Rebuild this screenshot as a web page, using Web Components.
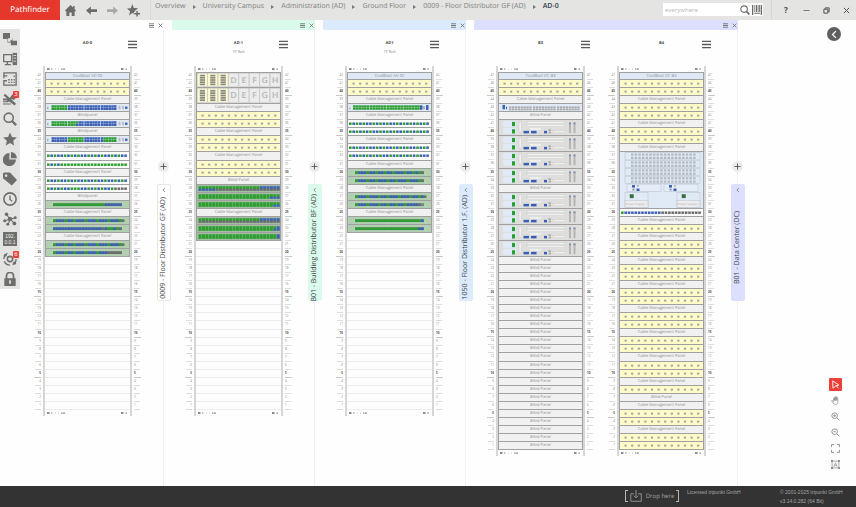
<!DOCTYPE html>
<html lang="en">
<head>
<meta charset="utf-8">
<title>Pathfinder</title>
<style>
  body { margin: 0; background: #fefefe; font-family: "Noto Sans", "Open Sans", sans-serif; }
</style>
</head>
<body>
<path-app></path-app>
<script>
const define = (name, html, init) => {
  const tpl = document.createElement('template');
  tpl.innerHTML = html;
  customElements.define(name, class extends HTMLElement {
    constructor() {
      super();
      this.attachShadow({ mode: 'open' }).append(tpl.content.cloneNode(true));
    }
    connectedCallback() {
      if (init && !this.ready) { this.ready = true; init(this, this.shadowRoot); }
    }
  });
};

/* ---------- icons, each on a 16 x 16 grid ---------- */
const ICONS = {
  home: '<path fill="currentColor" d="M8 0 0 8l1.2 1.300L2 8.600V16h4.300v-5h3.400v5H14V8.600l.8.7L16 8l-2-2V1.500h-2.200V3.700z"/>',
  back: '<path fill="currentColor" d="M0 8 7 2v4h9v4H7v4z"/>',
  fwd: '<path fill="currentColor" d="M16 8 9 2v4H0v4h9v4z"/>',
  starplus: '<path fill="currentColor" d="M6.500 0 8.400 4.900l5.200.3-4 3.400.3.900H8.500v2.600L6.500 11.200 2.500 14l1.300-5.100L0 5.500l4.800-.3zM11.500 8.500h1.800v2.600H16v1.800h-2.700v2.600h-1.800v-2.600H9v-1.800h2.500z"/>',
  search: '<circle cx="6.500" cy="6.500" r="5.200" fill="none" stroke="currentColor" stroke-width="1.800"/><path d="M10.500 10.500 15 15" stroke="currentColor" stroke-width="2.600"/>',
  barcode: '<path fill="currentColor" d="M0 0h2v16H0zM3.500 0h1v11h-1zM6 0h2.500v11H6zM9.500 0h1v11h-1zM11.500 0h1.500v11h-1.500zM14 0h2v16h-2zM3.500 12.500h9.500V14H3.500z"/>',
  min: '<path d="M1 8h14" stroke="currentColor" stroke-width="1.600"/>',
  restore: '<path fill="none" stroke="currentColor" stroke-width="2.200" d="M2 5h9v9H2zM5 4.500V2h9v9h-2.500"/>',
  close: '<path stroke="currentColor" stroke-width="2.200" d="M2 2l12 12M14 2 2 14"/>',
  menu: '<path stroke="currentColor" stroke-width="2.400" d="M0 2.500h16M0 8h16M0 13.500h16"/>',
  tree: '<path fill="currentColor" d="M0 1h8v6h3v3h5v5H9v-3H5V8H0zM5.500 7v4h3V9.500h2V7z" fill-rule="evenodd"/>',
  pc: '<path fill="none" stroke="currentColor" stroke-width="1.500" d="M.8 3h9v8h-9zM5 11v3M2 14.500h7"/><path fill="currentColor" d="M11 1h5v14h-5z"/><path stroke="#e3e3e1" d="M12 4h3M12 7h3M12 10.500h3"/>',
  plan: '<path fill="none" stroke="currentColor" stroke-width="1.500" d="M1 7V1h14v14H1v-5h3.500M1 4.500h4"/><path fill="currentColor" d="M6 8h1.700v1.700H6zM9 8h1.700v1.700H9zM12 8h1.500v1.700H12zM6 11h1.700v1.700H6zM9 11h1.700v1.700H9zM12 4h1.500v1.700H12zM12 11h1.500v1.700H12z"/>',
  tools: '<path fill="none" stroke="currentColor" stroke-width="2.300" d="M1.500 3 14 14M0 8.500h6l8 6"/><path fill="currentColor" d="M0 10.500h6v1.300H0zM0 13h9v1.300H0zM9 5l3-4 1.500 1-1 3 3 1-3 3-3-1-4 4-1.500-1.500z"/>',
  star: '<path fill="currentColor" d="M8 .5l2.200 5.200 5.600.5-4.200 3.700 1.200 5.600L8 12.600l-4.800 2.900 1.200-5.600L.2 6.200l5.600-.5z"/>',
  pie: '<path fill="currentColor" d="M7.300 1.200v7.500h7.500A7.500 7.500 0 1 1 7.300 1.200zM9 0a7 7 0 0 1 6.800 7H9z"/>',
  tag: '<path fill="currentColor" fill-rule="evenodd" d="M0 1.500 1.500.500H8l8 8.500-6 6.500L0 7zM3.500 2.600a1.500 1.500 0 1 0 .1 0z"/>',
  clock: '<circle cx="8" cy="8" r="7" fill="none" stroke="currentColor" stroke-width="1.800"/><path fill="none" stroke="currentColor" stroke-width="1.500" d="M8 4v4.500l2.500 2"/>',
  nodes: '<path stroke="currentColor" stroke-width="1.200" d="M8 8 4 3M8 8l6-1M8 8l-6 2M8 8l-2 6M8 8l5 5"/><g fill="currentColor"><circle cx="8" cy="8" r="2.600"/><circle cx="4" cy="2.500" r="2"/><circle cx="14" cy="6.500" r="1.700"/><circle cx="2" cy="10" r="1.800"/><circle cx="5.500" cy="14" r="1.700"/><circle cx="13" cy="13" r="2.200"/></g>',
  orbit: '<circle cx="8" cy="8" r="3" fill="none" stroke="currentColor" stroke-width="1.800"/><path fill="none" stroke="currentColor" stroke-width="1.600" d="M5 1.700A7 7 0 0 0 1 8M1.500 10.500A7 7 0 0 0 8 15M11 14.300A7 7 0 0 0 15 8"/><circle cx="2.600" cy="3.800" r="1.600" fill="currentColor"/><circle cx="13.300" cy="12.600" r="1.800" fill="currentColor"/>',
  lock: '<path fill="none" stroke="currentColor" stroke-width="2" d="M4 8V4.500a4 4 0 0 1 8 0V8"/><path fill="currentColor" fill-rule="evenodd" d="M1.500 7h13v9h-13zM7 9.500v4h2v-4z"/>',
  left: '<path fill="none" stroke="currentColor" stroke-width="2.400" d="M10.500 2 4.500 8l6 6"/>',
  up: '<path fill="none" stroke="currentColor" stroke-width="2.200" d="M10 3 5 8l5 5"/>',
  plus: '<path stroke="currentColor" stroke-width="2" d="M8 1v14M1 8h14"/>',
  cursor: '<path fill="none" stroke="currentColor" stroke-width="1.600" d="M3 1.500 14 9l-5 1.200L3.500 14.500zM9 9.500l4 5"/>',
  hand: '<path fill="none" stroke="currentColor" stroke-width="1.300" d="M4.500 10V4q1-1 1.800 0v4-6q1-1 1.800 0v6-6.500q1-1 2 0V8l.2-5q1-1 1.700 0l.2 8q-.5 4-4.200 4-3.500 0-4.800-3L1 8.500q1-1.500 3.500 1.500"/>',
  zoomin: '<circle cx="6.500" cy="6.500" r="5" fill="none" stroke="currentColor" stroke-width="1.700"/><path stroke="currentColor" stroke-width="1.600" d="M10.500 10.500 15 15M4 6.500h5M6.500 4v5"/>',
  zoomout: '<circle cx="6.500" cy="6.500" r="5" fill="none" stroke="currentColor" stroke-width="1.700"/><path stroke="currentColor" stroke-width="1.600" d="M10.500 10.500 15 15M4.500 6.500h4"/>',
  fit: '<path fill="none" stroke="currentColor" stroke-width="1.700" d="M1 5.500V1h4.500M10.500 1H15v4.500M15 10.500V15h-4.500M5.500 15H1v-4.500"/>',
  frame: '<path fill="none" stroke="currentColor" stroke-width="1.300" d="M2 2h12v12H2zM5 12l3-7 3 7M6 9.500h4"/><path fill="currentColor" d="M0 0h3.500v3.500H0zM12.500 0H16v3.500h-3.500zM0 12.500h3.500V16H0zM12.500 12.500H16V16h-3.500z"/>',
  drop: '<path fill="none" stroke="currentColor" stroke-width="1.200" d="M5 5H1v10h14V5h-4M8 0v10M5 7.500 8 10.500l3-3"/>'
};
define('ui-icon', `<style>
  :host { display: block; width: var(--s, 12px); height: var(--s, 12px); }
  svg { display: block; width: 100%; height: 100%; }
</style><svg viewBox="0 0 16 16" aria-hidden="true"></svg>`, (el, root) => {
  root.querySelector('svg').innerHTML = ICONS[el.getAttribute('name')];
});

/* ---------- top bar ---------- */
define('top-bar', `<style>
  :host { display: flex; height: 20px; background: #e4e4e2; color: #6b6b69; flex: none; }
  button { all: unset; display: grid; place-items: center; width: 20px; }
  .logo { width: 60px; display: grid; place-items: center; background: #e6372d; color: #fff; font-size: 8px; line-height: 20px; text-rendering: geometricPrecision; }
  .nav { display: flex; border-right: 1px solid #dadad8; width: 90px; }
  .nav button { width: 21px; }
  .nav ui-icon { --s: 11px; }
  .dim { color: #a8a8a6; }
  .crumbs { display: flex; align-items: flex-start; gap: 7px; padding: 0 4px; flex: 1; white-space: nowrap; font-size: 7px; line-height: 14px; text-rendering: geometricPrecision; }
  .crumbs a { color: #858582; text-decoration: none; }
  .crumbs i { width: 0; height: 0; align-self: flex-start; margin-top: 5px; border: 2px solid transparent; border-left: 3px solid #777; border-right: 0; }
  .crumbs span { color: #454e5a; font-weight: 600; }
  .find { display: flex; align-items: center; width: 100px; height: 13px; margin: 3px 8px 0 0; background: #fff; align-self: flex-start; }
  .find ui-icon { --s: 10px; }
  .find button { width: 12px; }
  input { flex: 1; min-width: 0; border: 0; padding: 0 0 0 2px; background: none; font: 6px "Noto Sans", sans-serif; outline: 0; }
  input::placeholder { color: #bcbcbc; }
  .win { display: flex; border-left: 1px solid #d6d6d4; padding-left: 4px; color: #4c4c4c; }
  .win ui-icon { --s: 7px; }
  b { font-size: 8px; line-height: 20px; }
</style>
<div class="logo">Pathfinder</div>
<nav class="nav">
  <button aria-label="Home"><ui-icon name="home"></ui-icon></button>
  <button aria-label="Back"><ui-icon name="back"></ui-icon></button>
  <button aria-label="Forward" class="dim"><ui-icon name="fwd"></ui-icon></button>
  <button aria-label="Add favourite"><ui-icon name="starplus" style="--s:13px"></ui-icon></button>
</nav>
<nav class="crumbs"><a href="#">Overview</a><i></i><a href="#">University Campus</a><i></i><a href="#">Administration (AD)</a><i></i><a href="#">Ground Floor</a><i></i><a href="#">0009 - Floor Distributor GF (AD)</a><i></i><span>AD-0</span></nav>
<div class="find"><input type="text" placeholder="everywhere" aria-label="Search everywhere">
  <button aria-label="Search"><ui-icon name="search"></ui-icon></button><button aria-label="Scan barcode"><ui-icon name="barcode"></ui-icon></button></div>
<div class="win"><button aria-label="Help"><b>?</b></button><button aria-label="Minimise"><ui-icon name="min"></ui-icon></button><button aria-label="Restore"><ui-icon name="restore"></ui-icon></button><button aria-label="Close"><ui-icon name="close"></ui-icon></button></div>`);

/* ---------- left tool rail ---------- */
define('side-bar', `<style>
  :host { display: flex; flex-direction: column; width: 20px; background: #e3e3e1; color: #6d6f6c; margin: 9px 1px 0 0; align-self: flex-start; flex: none; }
  button { all: unset; position: relative; display: grid; place-items: center; height: 20px; }
  ui-icon { --s: 14px; }
  em { position: absolute; top: 2px; right: 1px; min-width: 6px; font: 6px/7px "Noto Sans", sans-serif; text-align: center; color: #fff; background: #ee4038; border-radius: 1px; }
  .ip { width: 14px; height: 14px; background: #6d6f6c; color: #f1f1ef; font: 5px/6px "Liberation Sans", sans-serif; padding-top: 1px; box-sizing: border-box; text-align: center; }
</style>`, (el, root) => {
  for (const n of ['tree', 'pc', 'plan', 'tools:3', 'search', 'star', 'pie', 'tag', 'clock', 'nodes', 'ip', 'orbit:6', 'lock']) {
    const [name, badge] = n.split(':');
    const b = document.createElement('button');
    b.setAttribute('aria-label', name);
    b.innerHTML = (name === 'ip' ? '<div class="ip">192.<br>0.0.1</div>' : `<ui-icon name="${name}"></ui-icon>`) + (badge ? `<em>${badge}</em>` : '');
    root.append(b);
  }
});

/* ---------- rack devices ---------- */
const COL = { g: '#2a9e2c', b: '#3c5fb4', k: '#6a6a6a' };
const expand = s => s.replace(/([a-z])(\d+)/g, (m, c, n) => c.repeat(+n));
const rect = (x, y, w, h, f, extra = '') => `<rect x="${x}" y="${y}" width="${w}" height="${h}" fill="${f}" ${extra}/>`;
const ports = (s, x, y, pitch, w, h) => [...expand(s)].map((c, i) => rect(x + i * pitch, y, w, h, COL[c])).join('');
/* drawings use a canvas 83 wide and 8 high per rack unit */
const DRAW = {
  cool: () => '', cable: () => '', blind: () => '',
  fiber: () => Array.from({ length: 12 }, (_, i) => rect(4.500 + i * 6.600, 3, 2.200, 2.200, '#a3a3a0')).join(''),
  switch: a => {
    let o = rect(1, 3, 1.500, 3, '#a9b1bb');
    a.split(',').forEach((g, i) => {
      const [t, u] = g.split('/'), x = 5.500 + i * 16.400;
      o += ports(t, x, 1.400, 2.650, 2.500, 2.600) + ports(u || t, x, 4.200, 2.650, 2.500, 2.600);
    });
    return o + rect(72.500, 2, 2, 4, '#b9bec6') + rect(76, 2, 2, 4, '#b9bec6') + rect(79, 3, 2.500, 2.500, COL.b);
  },
  coreswitch: () => rect(1, 4, 1.500, 2, '#a9b1bb') + [0, 1, 2, 3].map(i => ports('g6', 5 + i * 16.800, 1.500, 2.750, 2.600, 2.400) + ports('g6', 5 + i * 16.800, 4.100, 2.750, 2.600, 2.400)).join('') + rect(72, 1.500, 2.500, 5, COL.b) + rect(75, 2.500, 2, 3.500, '#a9b1bb') + rect(78, 1.200, 2.500, 5.600, COL.b),
  patch: a => ports(a, 1, 2.800, 3.360, 2.600, 2.800),
  panel: a => rect(7, 2.600, 69, 3.200, '#6b8d7b') + ports(a, 7.200, 2.700, 2.860, 2.600, 2.900),
  dense: a => { const [t, u] = a.split('/'); return ports(t, 1.500, 1.400, 3.400, 3.050, 3) + ports(u, 1.500, 4.200, 3.400, 3.050, 2.400); },
  cards: () => {
    let o = '';
    for (let i = 0; i < 8; i++) {
      const x = i * 10.400 + .3;
      o += rect(x, .6, 10, 14.600, i < 3 ? '#fdfbd0' : '#ececec', 'stroke="#bbb" stroke-width=".5"');
      if (i < 3) for (let k = 0; k < 5; k++) o += rect(x + 2.500, 2 + k * 2.500, 5.200, 1.900, '#8a8a84');
      else o += `<text x="${x + 5}" y="11" font-size="9" font-weight="600" text-anchor="middle" fill="#b9b9b9">${'ABCDEFGH'[i]}</text>`;
    }
    return o;
  },
  greyswitch: () => {
    let o = rect(3.500, 1, 2.500, 5, COL.b) + rect(7, 3, 1, 3, COL.b);
    for (let g = 0; g < 3; g++) for (let r = 0; r < 2; r++) for (let i = 0; i < 8; i++) o += rect(10 + g * 24 + i * 2.900, 2.800 + r * 2.400, 2.300, 2, '#a8a8a8');
    return o;
  },
  server: () => rect(4, 1, 13, 6.300, '#dfeaf6') + rect(4, 8.300, 13, 6.300, '#dfeaf6') + rect(13, 2, 3, 4.500, COL.g) + rect(13, 9.800, 3, 4.500, COL.g)
    + rect(20, 2, 2.500, 11, '#efefef', 'stroke="#c4c4c4" stroke-width=".4"') + rect(28, 1.500, 38, 2.400, '#efefef', 'stroke="#c4c4c4" stroke-width=".4"') + rect(28, 4.700, 38, 2.400, '#efefef', 'stroke="#c4c4c4" stroke-width=".4"')
    + rect(31, 8.500, 11, 2, '#efefef') + rect(24.500, 11.500, 5.500, 2.700, COL.b) + rect(32, 11.500, 5.500, 2.700, COL.b) + rect(45, 11.500, 3, 2.700, COL.b) + rect(49.500, 9.800, 2.500, 1.800, '#aaa') + rect(49.500, 12.400, 2.500, 1.800, '#aaa')
    + rect(54, 11.300, 12, 2.200, '#efefef', 'stroke="#c4c4c4" stroke-width=".4"') + rect(70, 2, 2, 12, '#b4b4b4') + rect(74.500, 2, 2, 12, '#b4b4b4') + rect(70, 3, 2, 1.500, '#7d8fb0') + rect(74.500, 3, 2, 1.500, '#7d8fb0'),
  chassis: () => {
    const line = 'stroke="#b5c0cc" stroke-width=".5"';
    let o = '';
    for (let k = 0; k < 4; k++) {
      o += rect(5, .5 + k * 8, 75, 7.500, '#dfeaf5', line);
      for (let r = 0; r < 2; r++) for (let i = 0; i < 18; i++) o += rect(11 + i * 3.650, 1.500 + k * 8 + r * 3.400, 2.500, 2.200, '#b3b8bf');
    }
    for (const x of [7, 44]) o += rect(x, 32.500, 34, 7.500, '#e4edf7', line) + rect(x + 5, 33.500, 3, 2.500, COL.b) + rect(x + 10, 33.500, 2, 1.500, '#aaa') + rect(x + 5.500, 37, 2, 2, '#8b93a5') + rect(x + 9.500, 37, 3, 2.500, COL.b);
    for (const x of [5, 57]) o += rect(x, 41, 23, 15, '#dfeaf5', line) + rect(x + 5, 43, 3.500, 3.500, '#207a30', 'stroke="#555" stroke-width=".4"') + rect(x, 49, 23, 7, '#ededed', line)
      + `<text x="${x + 11.500}" y="53.500" font-size="3" text-anchor="middle" fill="#b3b3b3">Power Supply ${x < 9 ? 1 : 2}</text>`;
    return o;
  }
};
define('rack-device', `<style>
  :host { display: grid; position: relative; min-height: 0; overflow: hidden; box-sizing: border-box; border: 0 solid #a0a0a0; border-width: 0 1px 1px; background: var(--bg, #f1f1f1); text-rendering: geometricPrecision; }
  svg { grid-area: 1/1; width: 100%; height: 100%; display: block; min-height: 0; }
  span { grid-area: 1/1; text-align: center; font: 4px/8px "Open Sans", sans-serif; color: #8c8c8c; white-space: nowrap; }
  :host([kind=cool]) { --bg: #dfe9f6; }
  :host([kind=switch]), :host([kind=coreswitch]), :host([kind=chassis]), :host([kind=greyswitch]) { --bg: #dfeaf6; }
  :host([kind=fiber]) { --bg: #fdfcc9; }
  :host([kind=patch]) { --bg: #fcfcfc; }
  :host([kind=panel]) { --bg: #b3cfb2; }
  :host([kind=dense]) { --bg: #a3bda3; }
  :host([kind=server]) { --bg: #dededc; }
</style><svg preserveAspectRatio="none" aria-hidden="true"></svg><span><slot></slot></span>`, (el, root) => {
  const svg = root.querySelector('svg');
  svg.setAttribute('viewBox', `0 0 83 ${el.getAttribute('units') * 8}`);
  svg.innerHTML = DRAW[el.getAttribute('kind')](el.getAttribute('ports') || '');
});

/* ---------- rack ---------- */
const Y = ['fiber'], C = ['cable'], BP = ['blind', 1, '', 'Blind Panel'], BL = ['blind', 1, '', 'Blindpanel'], SRV = ['server', 2];
const p = (kind, ports) => [kind, 1, ports];
const RACKS = {
  'AD-0': { units: 42, items: [['cool', 1, '', 'CoolBlast AD 00'], Y, Y, C, p('switch', 'g6,b6,b6,b6'), BL, p('switch', 'g6,g4b2/g3b3,b6,b6'), BL, p('switch', 'b6,g6,b6,bg5'), C,
    p('patch', 'gbgbbgbgbgbbgbgbgbbgbgbb'), p('patch', 'gbgbg20'), C, p('patch', 'gbbgbbgbgbbgbbgbbgbbgbgb'), p('patch', 'gbgbgbbgggbbgbgbgbbgk4'), BL,
    p('panel', 'g18b6'), C, p('panel', 'gb3gb2gb3gb3gb3gb3gk'), p('panel', 'b17k1b1g2b1gk'), C, p('panel', 'gb3gb2gb3gb3gb3gb3gk'), p('panel', 'gb3gbbgb3gb3gb3k5')] },
  'AD-1': { units: 42, sub: '19" Rack', items: [['cards', 2], ['cards', 2], C, Y, Y, C, Y, Y, C, Y, Y, BP,
    p('dense', 'g18b6/b5k19'), p('dense', 'g24/g21b3'), p('dense', 'g24/g22b2'), C, p('dense', 'g18b6/k24'), p('dense', 'g23b/g22b2'), p('dense', 'g23b/g23b')] },
  'AD1': { units: 42, sub: '19" Rack', items: [['cool', 1, '', 'CoolBlast AD 02'], Y, Y, C, ['coreswitch'], C,
    p('patch', 'gbgbgbbgbgbgbbgbgbgbgbgb'), p('patch', 'gbgbgbgbbgbgbgbbgbgbgbgb'), C, p('patch', 'gbgbbgbbgbgbbgbgbgbbgbgb'), p('patch', 'gbbgbgbgbgbbgbgbgbgbgbbb'), C,
    p('panel', 'gb3gb2gb2gb2gb3gbbgbgk'), p('panel', 'gb3gb2gb3gbbgb3gb3gk'), C, p('panel', 'gb3gb3gbbgb3gb3gbbgbk'), p('panel', 'gb3gb3gbbgbbgb2gb4k'), C, p('panel', 'g23b'), p('panel', 'g22b2')] },
  'B3': { units: 47, items: [['cool', 1, '', 'CoolBlast DC B3'], Y, Y, C, ['greyswitch'], BP, SRV, SRV, SRV, SRV, BP, SRV, SRV, SRV, SRV, ...Array(24).fill(BP)] },
  'B4': { units: 47, items: [['cool', 1, '', 'CoolBlast DC B4'], Y, Y, C, Y, Y, C, Y, Y, C, ['chassis', 7], p('patch', 'gb11k12'), C, Y, C, Y, Y, C, Y, Y, C, Y, Y, C, Y, Y, C, Y, Y, C, Y, Y, C, Y, BP, C, Y, Y, C, Y, Y] }
};
define('rack-view', `<style>
  :host { display: block; width: 121px; flex: none; }
  header { display: grid; grid-template-columns: 1fr 30px 1fr; align-content: start; row-gap: 1px; height: 27px; padding-top: 9px; }
  h2 { grid-column: 2; margin: 0; font-size: 4px; line-height: 10px; text-align: center; color: #444; text-rendering: geometricPrecision; }
  small { grid-column: 2; font-size: 3px; line-height: 4px; text-align: center; color: #888; }
  button { all: unset; grid-column: 3; grid-row: 1; justify-self: end; margin-right: 11px; align-self: center; color: #5a5a5a; }
  button ui-icon { --s: 9px; }
  .rack { display: grid; grid-template-columns: 7px 89px 7px; column-gap: 2px; justify-content: center; }
  .end { grid-column: 2; display: flex; justify-content: space-between; align-items: center; height: 6px; border: solid #d6d6d6; border-width: 0 2px; padding: 0 2px; color: #8c8c8c; box-sizing: border-box; }
  .end svg { display: block; height: 2px; }
  .body, .nums { display: grid; grid-template-rows: repeat(var(--n), 1fr); height: var(--h); }
  .body { border: solid #d6d6d6; border-width: 0 2px; }
  .body rack-device:first-child { border-top-width: 1px; }
  .nums { grid-column: 1; font-size: 3px; line-height: 7px; color: #909090; }
  .nums i { font-style: normal; text-align: right; border-bottom: 1px solid #dcdcdc; min-height: 0; overflow: hidden; box-sizing: border-box; margin-left: 1px; }
  .nums i.major { margin: 0; font-weight: 700; color: #444; border-color: #c8c8c8; }
  .nums.r { grid-column: 3; }
  .nums.r i { text-align: left; margin: 0 1px 0 0; }
  .nums.r i.major { margin: 0; }
  .free { border-bottom: 1px solid #ececec; box-sizing: border-box; min-height: 0; }
</style>
<header><h2></h2><small></small><button aria-label="Rack menu"><ui-icon name="menu"></ui-icon></button></header>
<div class="rack"><div class="end"></div><div class="nums l"></div><div class="body"></div><div class="nums r"></div><div class="end"></div></div>`, (el, root) => {
  const name = el.getAttribute('name'), cfg = RACKS[name], $ = s => root.querySelector(s);
  $('h2').textContent = name;
  $('small').textContent = cfg.sub || '';
  $('.rack').style.cssText = `--n:${cfg.units};--h:${cfg.units > 42 ? 378 : 338}px`;
  root.querySelectorAll('.end').forEach(e => e.innerHTML = '<svg viewBox="0 0 18 2" width="18"><path fill="currentColor" d="M0 0h2.500v2H0zM4 .5h1.500v1H4zM8 .8h.6v.6H8zM11 .8h.6v.6H11zM14 0h.6v2H14zM15.500 .4h2.500v1.300h-2.500z"/></svg><svg viewBox="0 0 7 2" width="7"><path fill="currentColor" d="M0 0h2.500v2H0zM4.500 .5H6v1.200H4.500z"/></svg>');
  let nums = '';
  for (let n = cfg.units; n; n--) nums += `<i${n % 5 ? '' : ' class="major"'}>${n}</i>`;
  $('.l').innerHTML = $('.r').innerHTML = nums;
  let used = 0, html = '';
  for (const [kind, u = 1, pt = '', label] of cfg.items) {
    used += u;
    html += `<rack-device kind="${kind}" units="${u}" ports="${pt}" style="grid-row:span ${u}">${label || (kind === 'cable' ? 'Cable Management Panel' : '')}</rack-device>`;
  }
  $('.body').innerHTML = html + '<div class="free"></div>'.repeat(cfg.units - used);
});

/* ---------- location column with its vertical tab ---------- */
define('location-group', `<style>
  :host { display: flex; flex-direction: column; position: relative; flex: none; }
  .strip { display: flex; justify-content: flex-end; gap: 4px; align-items: center; height: 10px; padding-right: 1px; background: var(--tint, #fefefe); color: #5c5c5c; }
  button { all: unset; display: grid; place-items: center; }
  .strip ui-icon { --s: 5px; }
  .main { flex: 1; display: flex; padding: 0 15px 0 6px; border-right: 1px solid #f0f0f0; }
  .add { position: absolute; top: 141px; right: -5px; width: 11px; height: 11px; border-radius: 50%; background: #ececec; color: #555; }
  .add ui-icon { --s: 7px; }
  .tab { position: absolute; top: 164px; right: -7px; width: 14px; height: 117px; box-sizing: border-box; display: grid; grid-template-rows: 10px 105px; place-items: center; background: var(--tint, #fefefe); border: 1px solid var(--edge, var(--tint)); border-radius: 2px; color: #3f4347; }
  .tab ui-icon { --s: 6px; color: #7a7a7a; }
  .tab span { writing-mode: vertical-rl; rotate: 180deg; font: 7px/12px "Open Sans", sans-serif; white-space: nowrap; text-rendering: geometricPrecision; }
</style>
<div class="strip"><button aria-label="Menu"><ui-icon name="menu"></ui-icon></button><button aria-label="Close"><ui-icon name="close"></ui-icon></button></div>
<div class="main"><slot></slot></div>
<button class="add" aria-label="Add"><ui-icon name="plus"></ui-icon></button>
<button class="tab"><ui-icon name="up"></ui-icon><span></span></button>`, (el, root) => {
  root.querySelector('.tab span').textContent = el.getAttribute('label');
});

/* ---------- canvas tools on the right ---------- */
define('canvas-tools', `<style>
  :host { display: flex; flex-direction: column; align-items: center; justify-content: space-between; margin-left: auto; width: 16px; padding: 7px 13px 15px 0; }
  button { all: unset; display: grid; place-items: center; }
  .fold { width: 14px; height: 14px; border-radius: 50%; background: #5f5f5f; color: #fff; margin-right: 2px; }
  .fold ui-icon { --s: 9px; }
  .list { display: grid; gap: 3px; color: #8f8f8f; }
  .list button { width: 13px; height: 13px; }
  .list ui-icon { --s: 9px; }
  .list .on { background: #ee4038; color: #fff; border-radius: 1px; }
</style>
<button class="fold" aria-label="Collapse"><ui-icon name="left"></ui-icon></button>
<div class="list"><button class="on" aria-label="Select"><ui-icon name="cursor"></ui-icon></button><button aria-label="Pan"><ui-icon name="hand"></ui-icon></button><button aria-label="Zoom in"><ui-icon name="zoomin"></ui-icon></button><button aria-label="Zoom out"><ui-icon name="zoomout"></ui-icon></button><button aria-label="Fit"><ui-icon name="fit"></ui-icon></button><button aria-label="Frame labels"><ui-icon name="frame"></ui-icon></button></div>`);

define('app-footer', `<style>
  :host { display: flex; justify-content: flex-end; min-height: 21px; background: #333; color: #a3a3a3; flex: none; font: 5px/9px "Liberation Sans", sans-serif; }
  .drop { display: flex; align-items: center; justify-content: center; gap: 4px; width: 54px; height: 12px; margin-top: 4px; font: 6px/12px "Open Sans", sans-serif; position: relative; text-rendering: geometricPrecision; }
  .drop::before, .drop::after { content: ""; position: absolute; top: 0; bottom: 0; width: 2px; border: 1px solid #b5b5b5; }
  .drop::before { left: 0; border-right: 0; }
  .drop::after { right: 0; border-left: 0; }
  .drop ui-icon { --s: 12px; color: #999; }
  .lic { width: 101px; padding: 2px 0 0 8px; box-sizing: border-box; }
  .ver { width: 76px; padding-top: 2px; }
</style>
<div class="drop"><ui-icon name="drop"></ui-icon>Drop here</div>
<div class="lic">Licensed tripunkt GmbH</div>
<div class="ver">© 2001-2025 tripunkt GmbH<br>v3.14.0.282 (64 Bit)</div>`);

define('path-app', `<style>
  :host { display: flex; flex-direction: column; min-height: 100vh; }
  main { flex: 1; display: flex; }
  .groups { display: flex; gap: 8px; }
</style>
<top-bar></top-bar>
<main>
  <side-bar></side-bar>
  <div class="groups">
    <location-group label="0009 - Floor Distributor GF (AD)" style="--edge:#e6e6e6"><rack-view name="AD-0"></rack-view></location-group>
    <location-group label="B01 - Building Distributor BF (AD)" style="--tint:#dafaec"><rack-view name="AD-1"></rack-view></location-group>
    <location-group label="1050 - Floor Distributor 1.F. (AD)" style="--tint:#dbebfd"><rack-view name="AD1"></rack-view></location-group>
    <location-group label="B01 - Data Center (DC)" style="--tint:#dcdffd"><rack-view name="B3"></rack-view><rack-view name="B4"></rack-view></location-group>
  </div>
  <canvas-tools></canvas-tools>
</main>
<app-footer></app-footer>`);
</script>
</body>
</html>
